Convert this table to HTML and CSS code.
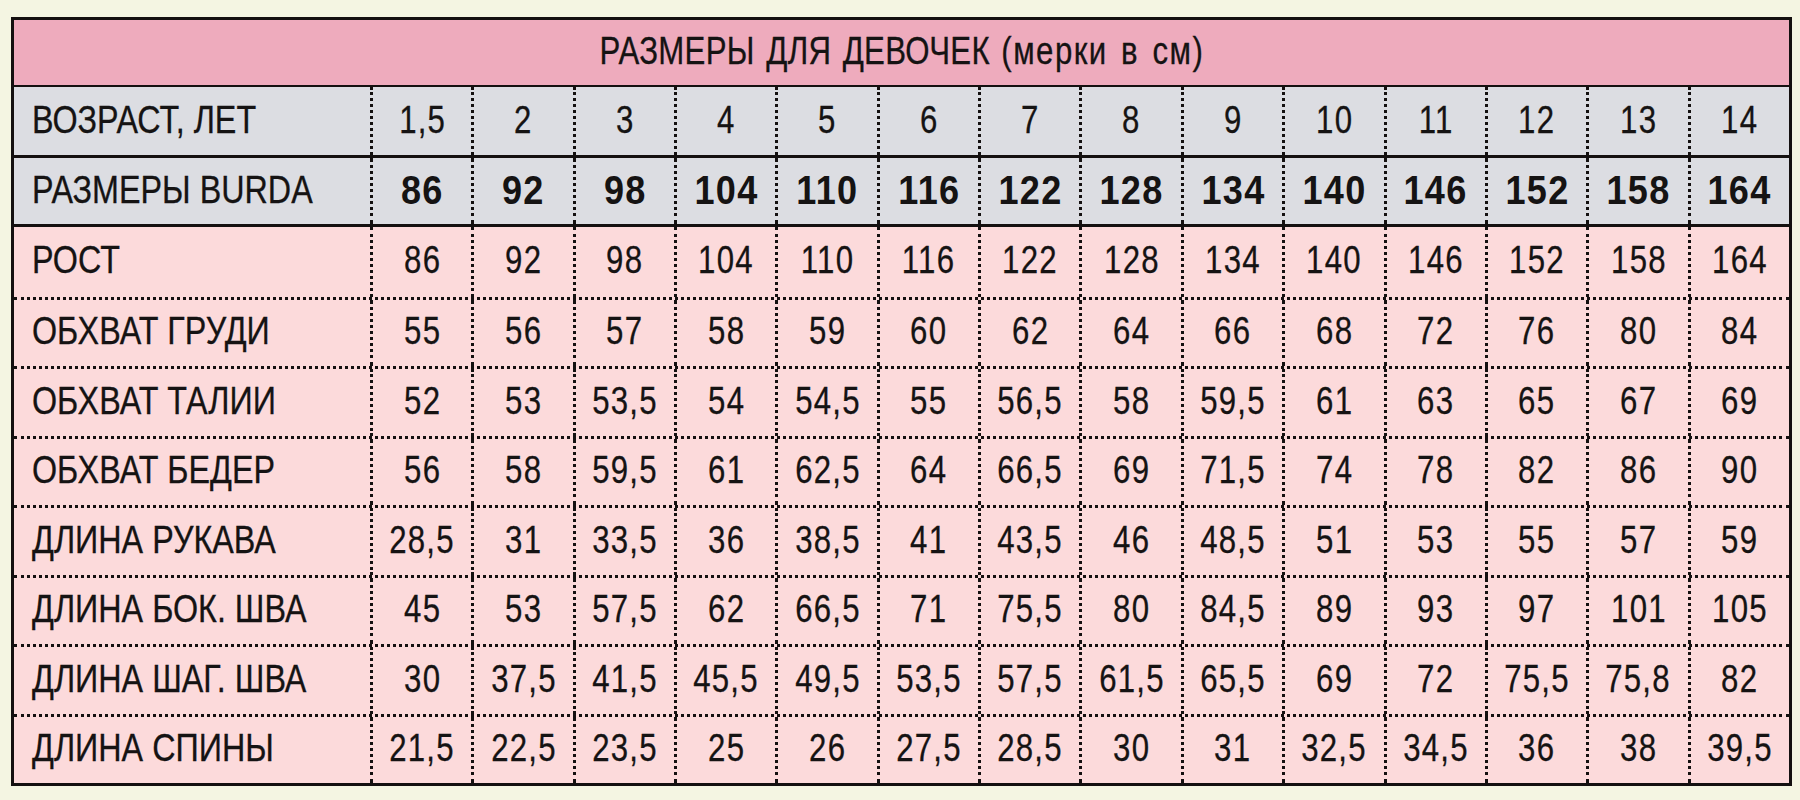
FILE: index.html
```html
<!DOCTYPE html>
<html lang="ru">
<head>
<meta charset="utf-8">
<title>Размеры для девочек</title>
<link rel="stylesheet" href="styles.css">
</head>
<body>
<div class="sheet">
  <div class="title"><span class="t">РАЗМЕРЫ ДЛЯ ДЕВОЧЕК <span class="sub">(мерки в см)</span></span></div>
  <div class="row head age">
    <div class="label"><span class="t">ВОЗРАСТ, ЛЕТ</span></div>
    <div class="cell"><span class="t">1,5</span></div><div class="cell"><span class="t">2</span></div><div class="cell"><span class="t">3</span></div><div class="cell"><span class="t">4</span></div><div class="cell"><span class="t">5</span></div><div class="cell"><span class="t">6</span></div><div class="cell"><span class="t">7</span></div><div class="cell"><span class="t">8</span></div><div class="cell"><span class="t">9</span></div><div class="cell"><span class="t">10</span></div><div class="cell"><span class="t">11</span></div><div class="cell"><span class="t">12</span></div><div class="cell"><span class="t">13</span></div><div class="cell"><span class="t">14</span></div>
  </div>
  <div class="row head burda">
    <div class="label"><span class="t">РАЗМЕРЫ BURDA</span></div>
    <div class="cell"><span class="t">86</span></div><div class="cell"><span class="t">92</span></div><div class="cell"><span class="t">98</span></div><div class="cell"><span class="t">104</span></div><div class="cell"><span class="t">110</span></div><div class="cell"><span class="t">116</span></div><div class="cell"><span class="t">122</span></div><div class="cell"><span class="t">128</span></div><div class="cell"><span class="t">134</span></div><div class="cell"><span class="t">140</span></div><div class="cell"><span class="t">146</span></div><div class="cell"><span class="t">152</span></div><div class="cell"><span class="t">158</span></div><div class="cell"><span class="t">164</span></div>
  </div>
  <div class="row data">
    <div class="label"><span class="t">РОСТ</span></div>
    <div class="cell"><span class="t">86</span></div><div class="cell"><span class="t">92</span></div><div class="cell"><span class="t">98</span></div><div class="cell"><span class="t">104</span></div><div class="cell"><span class="t">110</span></div><div class="cell"><span class="t">116</span></div><div class="cell"><span class="t">122</span></div><div class="cell"><span class="t">128</span></div><div class="cell"><span class="t">134</span></div><div class="cell"><span class="t">140</span></div><div class="cell"><span class="t">146</span></div><div class="cell"><span class="t">152</span></div><div class="cell"><span class="t">158</span></div><div class="cell"><span class="t">164</span></div>
  </div>
  <div class="row data">
    <div class="label"><span class="t">ОБХВАТ ГРУДИ</span></div>
    <div class="cell"><span class="t">55</span></div><div class="cell"><span class="t">56</span></div><div class="cell"><span class="t">57</span></div><div class="cell"><span class="t">58</span></div><div class="cell"><span class="t">59</span></div><div class="cell"><span class="t">60</span></div><div class="cell"><span class="t">62</span></div><div class="cell"><span class="t">64</span></div><div class="cell"><span class="t">66</span></div><div class="cell"><span class="t">68</span></div><div class="cell"><span class="t">72</span></div><div class="cell"><span class="t">76</span></div><div class="cell"><span class="t">80</span></div><div class="cell"><span class="t">84</span></div>
  </div>
  <div class="row data">
    <div class="label"><span class="t">ОБХВАТ ТАЛИИ</span></div>
    <div class="cell"><span class="t">52</span></div><div class="cell"><span class="t">53</span></div><div class="cell"><span class="t">53,5</span></div><div class="cell"><span class="t">54</span></div><div class="cell"><span class="t">54,5</span></div><div class="cell"><span class="t">55</span></div><div class="cell"><span class="t">56,5</span></div><div class="cell"><span class="t">58</span></div><div class="cell"><span class="t">59,5</span></div><div class="cell"><span class="t">61</span></div><div class="cell"><span class="t">63</span></div><div class="cell"><span class="t">65</span></div><div class="cell"><span class="t">67</span></div><div class="cell"><span class="t">69</span></div>
  </div>
  <div class="row data">
    <div class="label"><span class="t">ОБХВАТ БЕДЕР</span></div>
    <div class="cell"><span class="t">56</span></div><div class="cell"><span class="t">58</span></div><div class="cell"><span class="t">59,5</span></div><div class="cell"><span class="t">61</span></div><div class="cell"><span class="t">62,5</span></div><div class="cell"><span class="t">64</span></div><div class="cell"><span class="t">66,5</span></div><div class="cell"><span class="t">69</span></div><div class="cell"><span class="t">71,5</span></div><div class="cell"><span class="t">74</span></div><div class="cell"><span class="t">78</span></div><div class="cell"><span class="t">82</span></div><div class="cell"><span class="t">86</span></div><div class="cell"><span class="t">90</span></div>
  </div>
  <div class="row data">
    <div class="label"><span class="t">ДЛИНА РУКАВА</span></div>
    <div class="cell"><span class="t">28,5</span></div><div class="cell"><span class="t">31</span></div><div class="cell"><span class="t">33,5</span></div><div class="cell"><span class="t">36</span></div><div class="cell"><span class="t">38,5</span></div><div class="cell"><span class="t">41</span></div><div class="cell"><span class="t">43,5</span></div><div class="cell"><span class="t">46</span></div><div class="cell"><span class="t">48,5</span></div><div class="cell"><span class="t">51</span></div><div class="cell"><span class="t">53</span></div><div class="cell"><span class="t">55</span></div><div class="cell"><span class="t">57</span></div><div class="cell"><span class="t">59</span></div>
  </div>
  <div class="row data">
    <div class="label"><span class="t">ДЛИНА БОК. ШВА</span></div>
    <div class="cell"><span class="t">45</span></div><div class="cell"><span class="t">53</span></div><div class="cell"><span class="t">57,5</span></div><div class="cell"><span class="t">62</span></div><div class="cell"><span class="t">66,5</span></div><div class="cell"><span class="t">71</span></div><div class="cell"><span class="t">75,5</span></div><div class="cell"><span class="t">80</span></div><div class="cell"><span class="t">84,5</span></div><div class="cell"><span class="t">89</span></div><div class="cell"><span class="t">93</span></div><div class="cell"><span class="t">97</span></div><div class="cell"><span class="t">101</span></div><div class="cell"><span class="t">105</span></div>
  </div>
  <div class="row data">
    <div class="label"><span class="t">ДЛИНА ШАГ. ШВА</span></div>
    <div class="cell"><span class="t">30</span></div><div class="cell"><span class="t">37,5</span></div><div class="cell"><span class="t">41,5</span></div><div class="cell"><span class="t">45,5</span></div><div class="cell"><span class="t">49,5</span></div><div class="cell"><span class="t">53,5</span></div><div class="cell"><span class="t">57,5</span></div><div class="cell"><span class="t">61,5</span></div><div class="cell"><span class="t">65,5</span></div><div class="cell"><span class="t">69</span></div><div class="cell"><span class="t">72</span></div><div class="cell"><span class="t">75,5</span></div><div class="cell"><span class="t">75,8</span></div><div class="cell"><span class="t">82</span></div>
  </div>
  <div class="row data">
    <div class="label"><span class="t">ДЛИНА СПИНЫ</span></div>
    <div class="cell"><span class="t">21,5</span></div><div class="cell"><span class="t">22,5</span></div><div class="cell"><span class="t">23,5</span></div><div class="cell"><span class="t">25</span></div><div class="cell"><span class="t">26</span></div><div class="cell"><span class="t">27,5</span></div><div class="cell"><span class="t">28,5</span></div><div class="cell"><span class="t">30</span></div><div class="cell"><span class="t">31</span></div><div class="cell"><span class="t">32,5</span></div><div class="cell"><span class="t">34,5</span></div><div class="cell"><span class="t">36</span></div><div class="cell"><span class="t">38</span></div><div class="cell"><span class="t">39,5</span></div>
  </div>
</div>
</body>
</html>
```
FILE: styles.css
```css
html, body {
  margin: 0;
  padding: 0;
}
body {
  background: #f4f5e2;
  width: 1800px;
  height: 800px;
  overflow: hidden;
  font-family: "Liberation Sans", Arial, sans-serif;
  color: #151313;
}
.sheet {
  box-sizing: border-box;
  width: 1781px;
  margin: 17px 0 0 11px;
  border: 3px solid #141010;
  background: #fcdadb;
}
.t {
  display: inline-block;
  transform: scaleX(0.82);
  white-space: nowrap;
  -webkit-text-stroke: 0.3px currentColor;
}
.title {
  box-sizing: border-box;
  height: 67px;
  border-bottom: 2px solid #141010;
  background: #eeabbd;
  display: flex;
  align-items: center;
  justify-content: center;
  font-size: 38px;
  padding-bottom: 2px;
}
.title .t {
  transform-origin: center;
  word-spacing: 3px;
  letter-spacing: 0.4px;
}
.title .sub {
  letter-spacing: 1.8px;
  word-spacing: 4px;
}
.row {
  box-sizing: border-box;
  display: grid;
  grid-template-columns: 356px repeat(14, 1fr);
  font-size: 38px;
}
.head {
  background: #dcdde2;
  border-bottom: 3px solid #141010;
}
.age {
  height: 71px;
}
.burda {
  height: 69px;
}
.burda .cell {
  font-weight: bold;
  font-size: 41px;
}
.burda .cell .t {
  transform: scaleX(0.88);
  -webkit-text-stroke: 0;
}
.data {
  height: 69.5px;
  background: #fcdadb;
}
.data + .data {
  border-top: 3px dotted #141010;
}
.label {
  display: flex;
  align-items: center;
  padding-left: 18px;
  padding-bottom: 2px;
  white-space: nowrap;
}
.label .t {
  transform: scaleX(0.85);
  transform-origin: left center;
}
.cell {
  display: flex;
  align-items: center;
  justify-content: center;
  border-left: 3px dotted #141010;
  padding-bottom: 2px;
  white-space: nowrap;
}
.cell .t {
  letter-spacing: 1.5px;
  transform-origin: center;
}
```
